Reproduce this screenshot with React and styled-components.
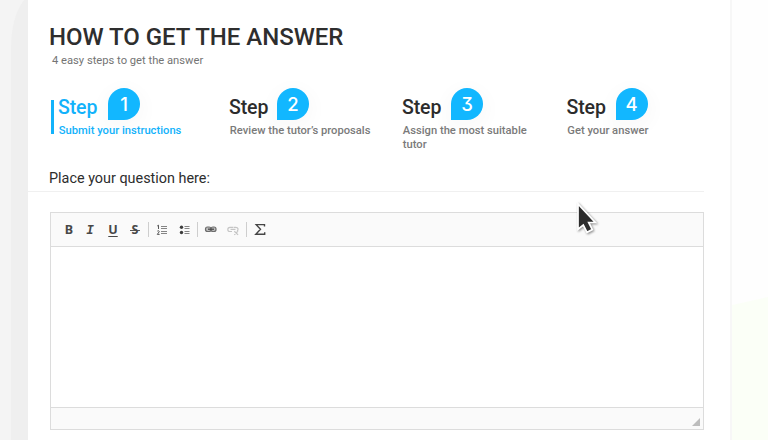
import React from "react";
import styled, { createGlobalStyle } from "styled-components";

const GlobalStyle = createGlobalStyle`
  * { box-sizing: border-box; }
  body { margin: 0; background: #fff; overflow: hidden; font-family: Roboto, sans-serif; }
  h1, h2, h3, p { margin: 0; }
`;

const Page = styled.div`
  position: relative;
  width: 768px;
  height: 440px;
  overflow: hidden;
  padding-left: 28px;
  background: #fefefe;
`;
const Backdrop = styled.svg`
  position: absolute;
  inset: 0;
`;
const Card = styled.main`
  position: relative;
  width: 704px;
  height: 440px;
  padding-top: 23px;
  background: #fff;
  border-right: 2px solid #f7f7f7;
`;
const Title = styled.h1`
  margin-left: 21px;
  font-size: 24px;
  line-height: 28px;
  font-weight: 500;
  letter-spacing: -0.03px;
  color: #2e2e2e;
  white-space: nowrap;
`;
const Subtitle = styled.p`
  margin: 2px 0 0 24px;
  font-size: 11.2px;
  line-height: 16px;
  color: #747474;
`;
const Steps = styled.section`
  display: grid;
  grid-template-columns: 179px 173px 164.5px 137px;
  height: 81px;
  margin: 19px 0 0 22px;
`;
const StepItem = styled.article`
  height: 64px;
  color: ${(p) => (p.$active ? "#12b2fb" : "#2c2c2c")};
  display: flex;
  gap: 4px;
`;
const ActiveBar = styled.span`
  width: 3px;
  height: 34px;
  margin: 12px 0 0 1px;
  background: #12b2fb;
`;
const StepTop = styled.div`
  display: flex;
  height: 34px;
`;
const StepName = styled.h2`
  width: ${(p) => p.$width};
  padding-top: 8px;
  font-size: 19.5px;
  line-height: 24px;
  font-weight: 500;
  letter-spacing: -0.1px;
`;
const Badge = styled.span`
  width: 32px;
  height: 32px;
  display: grid;
  place-items: center;
  border-radius: 16px 16px 16px 0;
  background: #12b7ff;
  box-shadow: 0 5px 16px 7px rgba(0, 0, 0, 0.018);
  color: #fff;
  font: 500 18.5px/32px Inter, sans-serif;
  font-feature-settings: "cv09";
`;
const StepText = styled.p`
  position: relative;
  width: ${(p) => p.$width || "150px"};
  padding: 2px 0 0 0.8px;
  font-size: 11.2px;
  line-height: 14px;
  font-weight: 500;
  color: ${(p) => (p.$active ? "#12b2fb" : "#7a7a7a")};
`;
const Question = styled.h3`
  width: 676px;
  height: 23px;
  padding-left: 21px;
  border-bottom: 1px solid #f0f0f0;
  font-size: 14.4px;
  line-height: 20px;
  font-weight: 400;
  color: #2d2d2d;
`;
const Editor = styled.section`
  display: flex;
  flex-direction: column;
  width: 654px;
  height: 218px;
  margin: 20px 0 0 22px;
  border: 1px solid #dcdcdc;
`;
const Toolbar = styled.div`
  display: flex;
  align-items: center;
  height: 34px;
  flex: none;
  padding-left: 10px;
  border-bottom: 1px solid #dcdcdc;
  background: #fafafa;
`;
const FormatButton = styled.button`
  width: ${(p) => p.$width};
  height: 24px;
  padding: ${(p) => p.$drop || "0"} 0 0;
  border: 0;
  background: none;
  color: #484848;
  text-align: center;
  font-family: ${(p) => p.$font || '"Noto Sans"'}, sans-serif;
  font-size: 12.5px;
  line-height: 24px;
  font-weight: 700;
  font-style: ${(p) => p.$style || "normal"};
  text-decoration: ${(p) => p.$decoration || "none"};
  text-decoration-thickness: 1px;
  text-underline-offset: 2px;
`;
const Strike = styled.span`
  display: inline-block;
  padding: 0 1.5px;
  background: linear-gradient(#555, #555) center 12px / 100% 1px no-repeat;
`;
const EditArea = styled.div`
  flex: 1;
`;
const Footer = styled.div`
  display: flex;
  justify-content: flex-end;
  align-items: flex-end;
  height: 22px;
  padding: 0 3px 3px 0;
  border-top: 1px solid #dcdcdc;
  background: #fafafa;
`;
const Cursor = styled.svg`
  position: absolute;
  left: 573px;
  top: 200px;
  filter: drop-shadow(1px 1px 1px rgba(0, 0, 0, 0.45));
`;

const steps = [
  { n: 1, text: "Submit your instructions", active: true, width: "50px" },
  { n: 2, text: "Review the tutor’s proposals", width: "48px" },
  { n: 3, text: "Assign the most suitable tutor", width: "49px", textWidth: "130px" },
  { n: 4, text: "Get your answer", width: "49px" },
];

function ToolbarIcons() {
  return (
    <svg width="135" height="33" viewBox="147 213 135 33" fill="none" stroke="#454545">
      <path d="M148.5 222v15M197.5 222v15M246.5 222v15" stroke="#cecece" />
      <path d="M157.200 226l1.300-.8v3.800M157.300 231.200c1-1 2.500-.2 1.700.8l-1.700 2.400h2.300" strokeWidth=".9" />
      <path d="M161 226.500h6M161 228.500h6M161 231.500h6M161 233.500h6" stroke="#777" strokeWidth=".9" />
      <circle cx="181.500" cy="227.200" r="1.700" fill="#3c3c3c" stroke="none" />
      <circle cx="181.500" cy="232.500" r="1.700" fill="#3c3c3c" stroke="none" />
      <path d="M184.500 226.500h5M184.500 228.500h5M184.500 231.500h5M184.500 233.500h5" stroke="#777" strokeWidth=".9" />
      <rect x="205.500" y="227" width="5.500" height="4.500" rx="2" fill="#bcbcbc" stroke="#6d6d6d" strokeWidth="1.200" />
      <rect x="211" y="227" width="5" height="4.500" rx="2" fill="#bcbcbc" stroke="#6d6d6d" strokeWidth="1.200" />
      <path d="M208 229.200h6" strokeWidth="1.200" />
      <path d="M233 227.300h-3c-2.900 0-2.900 4.200 0 4.200h2M233.500 227.300h2.300c2.500 0 2.900 2.700 1.300 3.600M230.500 229.400h5M234.300 231.200l3.800 3.700M238 231l-3.700 3.900" stroke="#c5c5c5" strokeWidth="1.200" />
      <path d="M264.500 226.600v-2h-8.300l4.300 4.700-4.700 5h8.900v-2" strokeWidth="1.400" />
    </svg>
  );
}

export default function App() {
  return (
    <Page>
      <GlobalStyle />
      <Backdrop width="768" height="440">
        <path d="M0 0h28v440H0z" fill="#f4f4f4" />
        <path d="M28 0h-4C15 12 11 28 11 50v390h17z" fill="#efefef" />
        <path d="M732 305l36-8v143h-36z" fill="#fbfff7" />
      </Backdrop>
      <Card>
        <Title>HOW TO GET THE ANSWER</Title>
        <Subtitle>4 easy steps to get the answer</Subtitle>
        <Steps>
          {steps.map((s) => (
            <StepItem key={s.n} $active={s.active}>
              {s.active && <ActiveBar />}
              <div>
                <StepTop>
                  <StepName $width={s.width}>Step</StepName>
                  <Badge>{s.n}</Badge>
                </StepTop>
                <StepText $active={s.active} $width={s.textWidth}>{s.text}</StepText>
              </div>
            </StepItem>
          ))}
        </Steps>
        <Question>Place your question here:</Question>
        <Editor>
          <Toolbar>
            <FormatButton $width="16px">B</FormatButton>
            <FormatButton $width="26px" $drop="1px" $style="italic" $font='"Liberation Mono"'>I</FormatButton>
            <FormatButton $width="20px" $decoration="underline">U</FormatButton>
            <FormatButton $width="24px"><Strike>S</Strike></FormatButton>
            <ToolbarIcons />
          </Toolbar>
          <EditArea />
          <Footer>
            <svg width="8" height="8"><path d="M8 0v8H0z" fill="#bdbdbd" /></svg>
          </Footer>
        </Editor>
      </Card>
      <Cursor width="28" height="36" viewBox="574 200 28 36">
        <path d="M579 204v25.200l5.300-4.200 3.700 7.300 5.300-2.700-3.600-7.100h6.600z" fill="#2c2c2c" stroke="#fff" strokeWidth="1.700" />
      </Cursor>
    </Page>
  );
}
